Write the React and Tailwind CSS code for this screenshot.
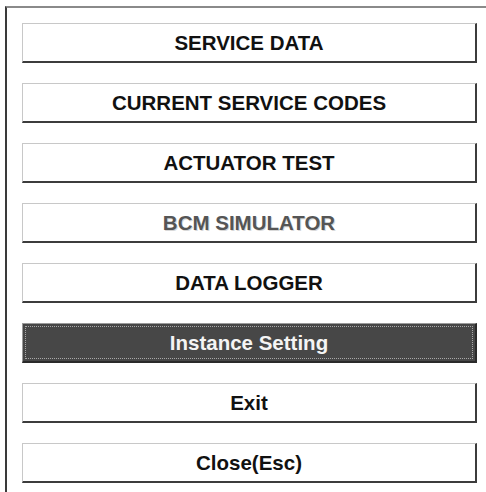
import React from "react";

const items = [
  { label: "SERVICE DATA" },
  { label: "CURRENT SERVICE CODES" },
  { label: "ACTUATOR TEST" },
  { label: "BCM SIMULATOR", disabled: true },
  { label: "DATA LOGGER" },
  { label: "Instance Setting", active: true },
  { label: "Exit" },
  { label: "Close(Esc)" },
];

export default function App() {
  return (
    <div
      className="w-[486px] h-[492px] bg-white overflow-hidden"
      style={{ fontFamily: '"Liberation Sans", Arial, sans-serif' }}
    >
      <div className="ml-[5px] mt-[6px] h-[486px] border-t-2 border-l-2 border-t-[#8a8a8a] border-l-[#3a3a3a] pl-[15px] pr-[9px] pt-[15px] flex flex-col gap-[20px]">
        {items.map((it) =>
          it.active ? (
            <div
              key={it.label}
              className="h-[40px] bg-[#474747] border-t border-l border-t-[#9a9a9a] border-l-[#9a9a9a] border-b-2 border-r-2 border-b-[#2a2a2a] border-r-[#2a2a2a] p-[2px] flex"
            >
              <div className="flex-1 border border-dotted border-[#a8a8a8] flex items-center justify-center pt-[2px] text-[20.5px] font-bold text-[#f4f4f4] leading-none">
                {it.label}
              </div>
            </div>
          ) : (
            <div
              key={it.label}
              className={`h-[40px] bg-white border-t border-l border-t-[#c8c8c8] border-l-[#c8c8c8] border-b-2 border-r-2 border-b-[#3c3c3c] border-r-[#3c3c3c] flex items-center justify-center pt-[2px] text-[20.5px] font-bold leading-none ${
                it.disabled ? "text-[#555555] [text-shadow:1px_1px_0_#d8d8d8]" : "text-[#111111]"
              }`}
            >
              {it.label}
            </div>
          )
        )}
      </div>
    </div>
  );
}
